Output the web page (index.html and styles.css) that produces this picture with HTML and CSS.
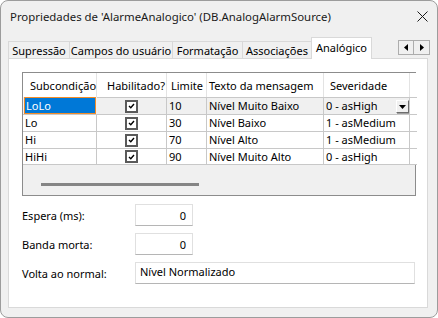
FILE: index.html
```html
<!DOCTYPE html>
<html>
<head>
<meta charset="utf-8">
<link rel="stylesheet" href="styles.css">
</head>
<body>
<div class="window">
  <div class="titlebar">
    <span class="title">Propriedades de 'AlarmeAnalogico' (DB.AnalogAlarmSource)</span>
    <svg class="close" width="11" height="11" viewBox="0 0 11 11"><path d="M0.5 0.5 L10.5 10.5 M10.5 0.5 L0.5 10.5" stroke="#1a1a1a" stroke-width="1" fill="none"/></svg>
  </div>
  <div class="tabs">
    <div class="tab t1">Supressão</div>
    <div class="tab t2">Campos do usuário</div>
    <div class="tab t3">Formatação</div>
    <div class="tab t4">Associações</div>
    <div class="tab t5 active">Analógico</div>
    <div class="tabscroll">
      <div class="arrow"><svg width="4" height="7" viewBox="0 0 4 7"><path d="M4 0 L0 3.5 L4 7 Z" fill="#000"/></svg></div>
      <div class="arrow"><svg width="4" height="7" viewBox="0 0 4 7"><path d="M0 0 L4 3.5 L0 7 Z" fill="#000"/></svg></div>
    </div>
  </div>
  <div class="panel">
    <div class="grid">
      <div class="rows">
        <div class="hd">Subcondição</div>
        <div class="hd">Habilitado?</div>
        <div class="hd">Limite</div>
        <div class="hd">Texto da mensagem</div>
        <div class="hd">Severidade</div>
        <div class="hd fill"></div>

        <div class="c sel-cell">LoLo</div>
        <div class="c cur center"><span class="chk"><svg width="7" height="6" viewBox="0 0 7 6"><path d="M1 3 L2.8 4.8 L6 1" stroke="#000" stroke-width="1.4" fill="none"/></svg></span></div>
        <div class="c cur">10</div>
        <div class="c cur">Nível Muito Baixo</div>
        <div class="c cur combo">0 - asHigh<span class="drop"><svg width="7" height="4" viewBox="0 0 7 4"><path d="M0 0 L7 0 L3.5 4 Z" fill="#000"/></svg></span></div>
        <div class="c fill"></div>

        <div class="c">Lo</div>
        <div class="c center"><span class="chk"><svg width="7" height="6" viewBox="0 0 7 6"><path d="M1 3 L2.8 4.8 L6 1" stroke="#000" stroke-width="1.4" fill="none"/></svg></span></div>
        <div class="c">30</div>
        <div class="c">Nível Baixo</div>
        <div class="c">1 - asMedium</div>
        <div class="c fill"></div>

        <div class="c">Hi</div>
        <div class="c center"><span class="chk"><svg width="7" height="6" viewBox="0 0 7 6"><path d="M1 3 L2.8 4.8 L6 1" stroke="#000" stroke-width="1.4" fill="none"/></svg></span></div>
        <div class="c">70</div>
        <div class="c">Nível Alto</div>
        <div class="c">1 - asMedium</div>
        <div class="c fill"></div>

        <div class="c">HiHi</div>
        <div class="c center"><span class="chk"><svg width="7" height="6" viewBox="0 0 7 6"><path d="M1 3 L2.8 4.8 L6 1" stroke="#000" stroke-width="1.4" fill="none"/></svg></span></div>
        <div class="c">90</div>
        <div class="c">Nível Muito Alto</div>
        <div class="c">0 - asHigh</div>
        <div class="c fill"></div>
      </div>
      <div class="hscroll"><div class="thumb"></div></div>
    </div>
    <div class="form">
      <div class="frow"><label>Espera (ms):</label><div class="input num">0</div></div>
      <div class="frow"><label>Banda morta:</label><div class="input num">0</div></div>
      <div class="frow"><label>Volta ao normal:</label><div class="input wide">Nível Normalizado</div></div>
    </div>
  </div>
</div>
</body>
</html>
```
FILE: styles.css
```css
html, body {
  margin: 0;
  padding: 0;
  background: #ffffff;
}
body {
  font-family: "Noto Sans", "Open Sans", sans-serif;
  font-size: 11px;
  color: #000;
}
.window {
  width: 438px;
  height: 318px;
  box-sizing: border-box;
  border: 1px solid #9c9c9c;
  border-radius: 8px;
  background: #f0f0f0;
  overflow: hidden;
  display: flex;
  flex-direction: column;
}
.titlebar {
  height: 30px;
  flex: none;
  display: flex;
  align-items: center;
  padding-left: 9px;
  padding-right: 9px;
  justify-content: space-between;
}
.title {
  font-size: 11.4px;
  color: #1a1a1a;
}
.close {
  margin-top: 1px;
}
.tabs {
  height: 21px;
  margin-top: 6px;
  padding-left: 7px;
  padding-right: 7px;
  display: flex;
  align-items: flex-end;
  position: relative;
  z-index: 1;
}
.tab {
  height: 17px;
  box-sizing: border-box;
  border: 1px solid #d9d9d9;
  border-bottom: none;
  border-left: none;
  background: #f0f0f0;
  display: flex;
  align-items: center;
  justify-content: center;
  padding-top: 1px;
  white-space: nowrap;
  color: #000;
}
.t1 { width: 62px; border-left: 1px solid #d9d9d9; }
.t2 { width: 103px; }
.t3 { width: 70px; }
.t4 { width: 69px; }
.t5 { width: 60px; }
.tab.active {
  height: 22px;
  margin-bottom: -1px;
  background: #ffffff;
  border-left: 1px solid #d9d9d9;
  margin-left: -1px;
  width: 61px;
  padding-top: 0;
  padding-bottom: 3px;
}
.tabscroll {
  margin-left: auto;
  display: flex;
  align-self: flex-start;
  margin-top: 3px;
}
.arrow {
  width: 16px;
  height: 15px;
  box-sizing: border-box;
  border: 1px solid #adadad;
  background: #f0f0f0;
  display: flex;
  align-items: center;
  justify-content: center;
}
.arrow + .arrow {
  border-left: none;
}
.panel {
  margin: 0 9px 0 7px;
  height: 250px;
  box-sizing: border-box;
  background: #ffffff;
  border: 1px solid #d9d9d9;
  padding: 13px 12px 0 13px;
}
.grid {
  width: 394px;
  height: 124px;
  box-sizing: border-box;
  border: 1px solid #8c8c8c;
  background: #f0f0f0;
  display: flex;
  flex-direction: column;
}
.rows {
  display: grid;
  grid-template-columns: 74px 70px 40px 117px 86px 1fr;
  grid-template-rows: 24px 17px 17px 17px 17px;
}
.hd {
  background: #ffffff;
  border-right: 1px solid #e3e3e3;
  display: flex;
  align-items: center;
  padding-left: 7px;
  color: #000;
  white-space: nowrap;
}
.hd:nth-child(2) { padding-left: 10px; }
.hd:nth-child(3) { padding-left: 4px; }
.hd:nth-child(4) { padding-left: 2px; }
.hd:nth-child(5) { padding-left: 6px; }
.hd.fill { border-right: none; }
.c {
  background: #ffffff;
  border-top: 1px solid #c8c8c8;
  border-right: 1px solid #c8c8c8;
  display: flex;
  align-items: center;
  padding-left: 2px;
  white-space: nowrap;
  overflow: hidden;
  line-height: 16px;
}
.c.fill {
  border-right: none;
  background: #ffffff;
}
.c.cur { background: #f0f0f0; }
.c.center { justify-content: center; padding-left: 0; }
.sel-cell {
  background: #0078d7;
  color: #ffffff;
  outline: 1px solid #f28c28;
  outline-offset: -1px;
  margin: 0 1px 0 1px;
}
.c:nth-last-child(-n+6) { border-bottom: 1px solid #c8c8c8; }
.chk {
  width: 13px;
  height: 13px;
  box-sizing: border-box;
  border: 2px solid #5a5a5a;
  background: #ffffff;
  display: flex;
  align-items: center;
  justify-content: center;
}
.combo {
  position: relative;
}
.drop {
  position: absolute;
  right: 0;
  top: 2px;
  width: 13px;
  height: 13px;
  box-sizing: border-box;
  background: #f0f0f0;
  border: 1px solid #ffffff;
  border-right-color: #6d6d6d;
  border-bottom-color: #6d6d6d;
  box-shadow: 1px 1px 0 #a0a0a0;
  display: flex;
  align-items: center;
  justify-content: center;
}
.hscroll {
  flex: 1;
  position: relative;
}
.thumb {
  position: absolute;
  left: 18px;
  top: 18px;
  width: 158px;
  height: 3px;
  background: #858585;
}
.form {
  padding-top: 8px;
  display: flex;
  flex-direction: column;
  gap: 7px;
}
.frow {
  display: flex;
  align-items: center;
}
.frow label {
  width: 113px;
  flex: none;
  color: #000;
}
.input {
  height: 22px;
  box-sizing: border-box;
  border: 1px solid #e0e0e0;
  border-bottom: 1px solid #b5b5b5;
  background: #ffffff;
  display: flex;
  align-items: center;
}
.input.num {
  width: 58px;
  justify-content: flex-end;
  padding-right: 6px;
}
.input.wide {
  width: 281px;
  padding-left: 4px;
  align-items: flex-start;
  padding-top: 1px;
}
```
